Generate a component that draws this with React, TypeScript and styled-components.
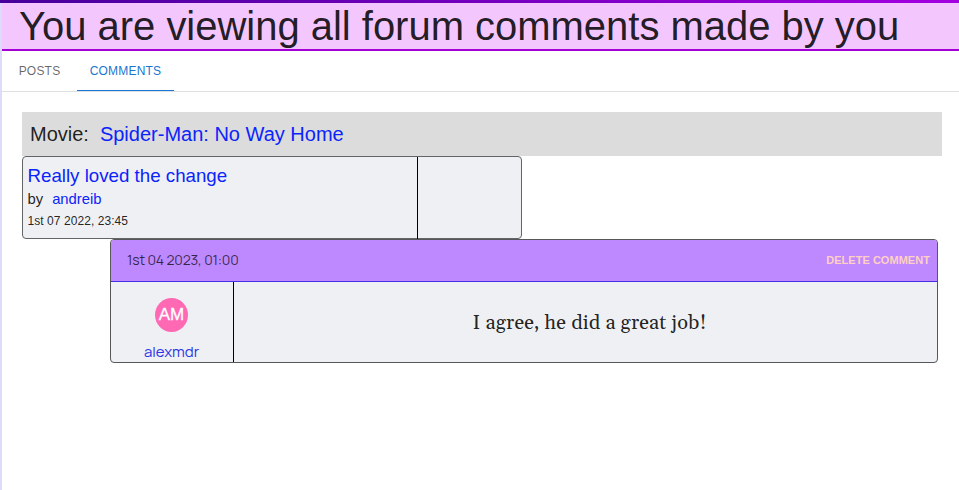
import React from "react";
import styled, { createGlobalStyle } from "styled-components";

const GlobalStyle = createGlobalStyle`
  * { box-sizing: border-box; }
  body {
    margin: 0;
    background: #fff;
    color: rgba(0, 0, 0, 0.87);
    font-family: "Liberation Sans", Arial, sans-serif;
    overflow: hidden;
  }
`;

const Page = styled.div`
  height: 490px;
  display: flex;
  flex-direction: column;
`;

const TopStrip = styled.div`
  flex: none;
  height: 3px;
  background: linear-gradient(90deg, #46009c, #a400e0);
`;

const Main = styled.main`
  flex: 1;
  border-left: 2px solid #dcdcf8;
`;

const Title = styled.h1`
  margin: 0;
  height: 48px;
  padding-left: 17px;
  border-bottom: 2px solid #a400d4;
  background: #f3c6fd;
  font-size: 40px;
  font-weight: 400;
  letter-spacing: -0.02px;
  line-height: 46px;
  white-space: nowrap;
`;

const Tabs = styled.nav`
  display: flex;
  height: 41px;
  border-bottom: 1px solid #e0e0e0;
`;

const Tab = styled.button<{ $active?: boolean; $width: number }>`
  width: ${(p) => p.$width}px;
  height: ${(p) => (p.$active ? 40 : 39)}px;
  padding: 1px 0 0;
  border: 0;
  border-bottom: ${(p) => (p.$active ? "1px solid #1976d2" : "0")};
  background: none;
  color: ${(p) => (p.$active ? "#1976d2" : "rgba(0, 0, 0, 0.6)")};
  font: 400 12px/15px "Liberation Sans", Arial, sans-serif;
  letter-spacing: 0.2px;
  text-transform: uppercase;
`;

const Content = styled.section`
  padding: 20px 17px 0 20px;
`;

const Link = styled.a<{ $gap?: number }>`
  margin-left: ${(p) => p.$gap ?? 0}px;
  color: #0b24fb;
  text-decoration: none;
`;

const MovieBar = styled.div`
  height: 44px;
  padding-left: 8px;
  background: #dcdcdc;
  font-size: 20px;
  line-height: 44px;
`;

const PostCard = styled.article`
  display: flex;
  width: 500px;
  height: 83px;
  border: 1px solid #626466;
  border-radius: 4px;
  background: #eff0f3;
`;

const PostBody = styled.div`
  width: 395px;
  height: 82px;
  padding: 6px 0 0 4.5px;
  border-right: 1px solid #000;
`;

const PostTitle = styled.div`
  font-size: 18.72px;
  line-height: 26px;
`;

const Author = styled.div`
  font-size: 14.8px;
  line-height: 21px;
`;

const PostDate = styled.div`
  font-size: 12px;
  line-height: 22px;
  letter-spacing: 0.06px;
`;

const CommentCard = styled.article`
  width: 828px;
  height: 124px;
  margin-left: 88px;
  border: 1px solid #555759;
  border-radius: 4px;
  background: #eff0f3;
  overflow: hidden;
`;

const CommentHeader = styled.header`
  display: flex;
  justify-content: space-between;
  height: 42px;
  padding: 0 7px 0 16px;
  border-bottom: 1px solid #4530e5;
  background: #be88ff;
  line-height: 39px;
`;

const CommentDate = styled.time`
  color: rgba(0, 0, 0, 0.72);
  font-family: Manrope, Inter, sans-serif;
  font-size: 14px;
  letter-spacing: -0.18px;
`;

const DeleteButton = styled.button`
  padding: 0;
  border: 0;
  background: none;
  color: #ffd0c4;
  font: 700 11px/41px "Liberation Sans", Arial, sans-serif;
  letter-spacing: 0.04px;
  text-transform: uppercase;
`;

const CommentRow = styled.div`
  display: flex;
  height: 80px;
`;

const User = styled.div`
  display: flex;
  flex-direction: column;
  align-items: center;
  width: 123px;
  padding: 16px 1px 0 0;
  border-right: 1px solid #000;
`;

const Avatar = styled.div`
  width: 33px;
  height: 34px;
  border-radius: 50%;
  background: #ff69b4;
  color: #fff;
  font-size: 17px;
  line-height: 33px;
  text-align: center;
  -webkit-text-stroke: 0.3px #fff;
`;

const Username = styled.a`
  margin-top: 10px;
  color: #2b35e6;
  font-family: Manrope, Inter, sans-serif;
  font-size: 15px;
  line-height: 20px;
`;

const Message = styled.p`
  flex: 1;
  margin: 0;
  padding: 1px 0 0 8px;
  font-family: Gelasio, "Noto Serif", "DejaVu Serif", serif;
  font-size: 20px;
  letter-spacing: 0.15px;
  line-height: 80px;
  text-align: center;
`;

export default function App() {
  return (
    <Page>
      <GlobalStyle />
      <TopStrip />
      <Main>
        <Title>You are viewing all forum comments made by you</Title>
        <Tabs>
          <Tab $width={75}>Posts</Tab>
          <Tab $width={97} $active>Comments</Tab>
        </Tabs>
        <Content>
          <MovieBar>
            Movie:<Link $gap={11}>Spider-Man: No Way Home</Link>
          </MovieBar>
          <PostCard>
            <PostBody>
              <PostTitle><Link>Really loved the change</Link></PostTitle>
              <Author>by<Link $gap={9}>andreib</Link></Author>
              <PostDate>1st 07 2022, 23:45</PostDate>
            </PostBody>
          </PostCard>
          <CommentCard>
            <CommentHeader>
              <CommentDate>1st 04 2023, 01:00</CommentDate>
              <DeleteButton>Delete comment</DeleteButton>
            </CommentHeader>
            <CommentRow>
              <User>
                <Avatar>AM</Avatar>
                <Username>alexmdr</Username>
              </User>
              <Message>I agree, he did a great job!</Message>
            </CommentRow>
          </CommentCard>
        </Content>
      </Main>
    </Page>
  );
}
